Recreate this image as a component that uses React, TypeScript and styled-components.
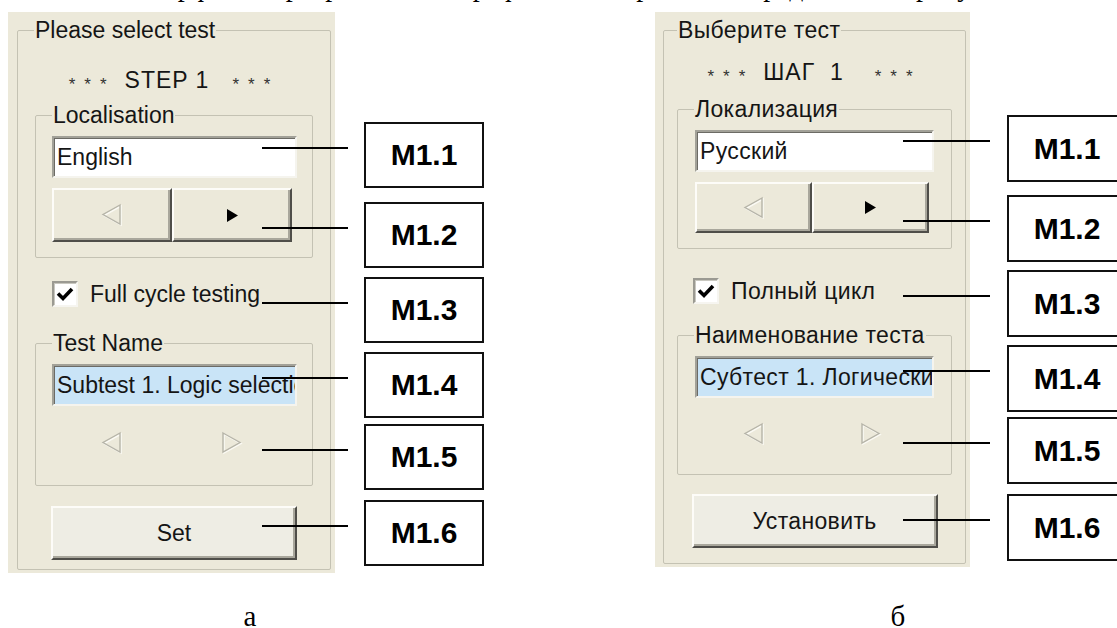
import React from 'react'
import styled, { createGlobalStyle } from 'styled-components'

const GlobalStyle = createGlobalStyle`
  html, body {
    margin: 0;
    padding: 0;
    background: #fff;
  }
  body {
    font-family: 'Liberation Sans', Arial, sans-serif;
  }
`

const Page = styled.div`
  width: 1117px;
  height: 628px;
  overflow: hidden;
  display: flex;
  flex-direction: column;
  background: #fff;
`

const LeadText = styled.p`
  margin: -28px 0 0;
  padding: 0 0 0 118px;
  height: 30px;
  font-family: 'Liberation Serif', 'Times New Roman', serif;
  font-size: 28px;
  line-height: 30px;
  white-space: nowrap;
  word-spacing: 14px;
  color: #000;
`

const Figures = styled.div`
  display: flex;
  align-items: flex-start;
  margin-top: 10px;
`

const Figure = styled.figure<{ $left: number }>`
  margin: 0 0 0 ${(p) => p.$left}px;
  display: flex;
  flex-direction: column;
  flex-shrink: 0;
`

const FigureBody = styled.div<{ $gap: number }>`
  display: flex;
  align-items: flex-start;
  gap: ${(p) => p.$gap}px;
`

const Caption = styled.figcaption<{ $top: number; $shift: number }>`
  margin-top: ${(p) => p.$top}px;
  padding-left: ${(p) => p.$shift}px;
  text-align: center;
  font-family: 'Liberation Serif', 'Times New Roman', serif;
  font-size: 29px;
  line-height: 20px;
  color: #000;
`

const Panel = styled.div<{ $w: number; $h: number; $padLeft: number; $track: number }>`
  width: ${(p) => p.$w}px;
  height: ${(p) => p.$h}px;
  box-sizing: border-box;
  flex-shrink: 0;
  padding: 7px 4px 3px ${(p) => p.$padLeft}px;
  background: #ece9da;
  display: flex;
  flex-direction: column;
  font-family: 'Liberation Sans', Tahoma, Arial, sans-serif;
  font-size: 23px;
  letter-spacing: ${(p) => p.$track}px;
  color: #151515;
`

const Group = styled.fieldset<{ $inset: number; $grow?: boolean }>`
  margin: 0 ${(p) => p.$inset}px;
  padding: 0;
  min-width: 0;
  flex: ${(p) => (p.$grow ? 1 : 'none')};
  border: 1px solid #c4c2b3;
  border-radius: 2px;
  display: flex;
  flex-direction: column;
`

const Legend = styled.legend<{ $indent: number }>`
  margin-left: ${(p) => p.$indent}px;
  padding: 0 1px;
  font-size: 23px;
  line-height: 22px;
`

const GroupBody = styled.div<{ $left: number; $right: number }>`
  display: flex;
  flex-direction: column;
  padding: 10px ${(p) => p.$right}px 15px ${(p) => p.$left}px;
`

const Step = styled.div<{ $top: number; $gap: number }>`
  margin: ${(p) => p.$top}px 0 ${(p) => p.$gap}px;
  height: 22px;
  display: flex;
  align-items: center;
  justify-content: center;
  gap: 9px;
  line-height: 22px;
`

const StepText = styled.span<{ $after: number }>`
  margin-right: ${(p) => p.$after}px;
  letter-spacing: 1px;
  white-space: pre;
`

const Stars = styled.span`
  font-size: 17px;
  letter-spacing: 9px;
  margin-top: 9px;
  color: #333;
`

const Field = styled.div<{ $tone: 'white' | 'blue' }>`
  height: 42px;
  box-sizing: border-box;
  padding-left: 3px;
  background: ${(p) => (p.$tone === 'blue' ? '#c9e4f7' : '#ffffff')};
  border: 2px solid;
  border-color: #a2a198 #f5f4ee #f5f4ee #a2a198;
  box-shadow: inset 1px 1px 0 #6c6b65;
  line-height: 38px;
  white-space: nowrap;
  overflow: hidden;
`

const ButtonRow = styled.div<{ $h: number }>`
  margin: 10px 5px 0 0;
  height: ${(p) => p.$h}px;
  display: grid;
  grid-template-columns: 1fr 1fr;
`

const NavButton = styled.button<{ $flat?: boolean }>`
  margin: 0;
  padding: 0;
  display: flex;
  align-items: center;
  justify-content: center;
  background: #ece9da;
  border: 2px solid;
  border-color: ${(p) => (p.$flat ? 'transparent' : '#fdfcf8 #4f4e49 #4f4e49 #fdfcf8')};
  box-shadow: ${(p) => (p.$flat ? 'none' : 'inset -2px -2px 0 #a9a79c')};
`

const CheckRow = styled.label<{ $top: number; $bottom: number; $indent: number }>`
  margin: ${(p) => p.$top}px 0 ${(p) => p.$bottom}px ${(p) => p.$indent}px;
  height: 26px;
  display: flex;
  align-items: center;
  gap: 12px;
  line-height: 22px;
`

const CheckBox = styled.span`
  width: 26px;
  height: 26px;
  flex-shrink: 0;
  box-sizing: border-box;
  background: #fff;
  border: 2px solid;
  border-color: #9b9a92 #f6f5f0 #f6f5f0 #9b9a92;
  box-shadow: inset 1px 1px 0 #c9c8c0;
  display: flex;
  align-items: center;
  justify-content: center;
`

const SetButton = styled.button<{ $top: number }>`
  margin: ${(p) => p.$top}px 0 0;
  align-self: center;
  width: 246px;
  height: 54px;
  padding: 0;
  background: #eeede4;
  border: 2px solid;
  border-color: #fdfcf8 #4f4e49 #4f4e49 #fdfcf8;
  box-shadow: inset -2px -2px 0 #a9a79c;
  font-family: 'Liberation Sans', Tahoma, Arial, sans-serif;
  font-size: 23px;
  letter-spacing: inherit;
  color: #151515;
`

const Callouts = styled.div`
  display: flex;
  flex-direction: column;
  flex-shrink: 0;
`

const Callout = styled.div<{ $top: number; $h: number; $lead: number; $leadW: number }>`
  position: relative;
  margin-top: ${(p) => p.$top}px;
  width: 120px;
  height: ${(p) => p.$h}px;
  box-sizing: border-box;
  border: 2px solid #111;
  background: #fff;
  display: flex;
  align-items: center;
  justify-content: center;
  font-family: 'Liberation Sans', Arial, sans-serif;
  font-weight: bold;
  font-size: 30px;
  color: #000;

  &::before {
    content: '';
    position: absolute;
    top: 23px;
    left: -${(p) => p.$lead}px;
    width: ${(p) => p.$leadW}px;
    height: 2px;
    background: #000;
  }
`

const Arrow = ({ dir, enabled }: { dir: 'left' | 'right'; enabled: boolean }) => {
  if (enabled) {
    return (
      <svg width="13" height="13" viewBox="0 0 13 13">
        <path d={dir === 'right' ? 'M1 0 L12 6.5 L1 13 Z' : 'M12 0 L1 6.5 L12 13 Z'} fill="#000" />
      </svg>
    )
  }
  const d = dir === 'left' ? 'M19 2 L2 11.5 L19 21 Z' : 'M2 2 L19 11.5 L2 21 Z'
  return (
    <svg width="22" height="24" viewBox="0 0 22 24">
      <path d={d} fill="none" stroke="#fbfaf4" strokeWidth="1.6" transform="translate(1 1)" />
      <path d={d} fill="none" stroke="#b6b4a8" strokeWidth="1.4" />
    </svg>
  )
}

const CheckMark = () => (
  <svg width="18" height="16" viewBox="0 0 18 16">
    <path d="M2 7.5 L7 12.5 L16 3" fill="none" stroke="#000" strokeWidth="3.6" />
  </svg>
)

type Spec = {
  width: number
  height: number
  padLeft: number
  track: number
  legendIndent: number
  inset: number
  bodyLeft: number
  bodyRight: number
  stepTop: number
  stepGap: number
  stepAfter: number
  buttonH: number
  checkTop: number
  checkBottom: number
  checkIndent: number
  setTop: number
  title: string
  step: string
  localeLabel: string
  locale: string
  checkLabel: string
  testLabel: string
  testName: string
  setLabel: string
}

const Dialog = ({ s }: { s: Spec }) => (
  <Panel $w={s.width} $h={s.height} $padLeft={s.padLeft} $track={s.track}>
    <Group $inset={0} $grow>
      <Legend $indent={s.legendIndent}>{s.title}</Legend>
      <Step $top={s.stepTop} $gap={s.stepGap}>
        <Stars>***</Stars>
        <StepText $after={s.stepAfter}>{s.step}</StepText>
        <Stars>***</Stars>
      </Step>
      <Group $inset={s.inset}>
        <Legend $indent={16}>{s.localeLabel}</Legend>
        <GroupBody $left={s.bodyLeft} $right={s.bodyRight}>
          <Field $tone="white">{s.locale}</Field>
          <ButtonRow $h={s.buttonH}>
            <NavButton>
              <Arrow dir="left" enabled={false} />
            </NavButton>
            <NavButton>
              <Arrow dir="right" enabled />
            </NavButton>
          </ButtonRow>
        </GroupBody>
      </Group>
      <CheckRow $top={s.checkTop} $bottom={s.checkBottom} $indent={s.checkIndent}>
        <CheckBox>
          <CheckMark />
        </CheckBox>
        {s.checkLabel}
      </CheckRow>
      <Group $inset={s.inset}>
        <Legend $indent={16}>{s.testLabel}</Legend>
        <GroupBody $left={s.bodyLeft} $right={s.bodyRight}>
          <Field $tone="blue">{s.testName}</Field>
          <ButtonRow $h={s.buttonH}>
            <NavButton $flat>
              <Arrow dir="left" enabled={false} />
            </NavButton>
            <NavButton $flat>
              <Arrow dir="right" enabled={false} />
            </NavButton>
          </ButtonRow>
        </GroupBody>
      </Group>
      <SetButton $top={s.setTop}>{s.setLabel}</SetButton>
    </Group>
  </Panel>
)

const english: Spec = {
  width: 327,
  height: 561,
  padLeft: 9,
  track: 0,
  legendIndent: 16,
  inset: 17,
  bodyLeft: 16,
  bodyRight: 15,
  stepTop: 28,
  stepGap: 13,
  stepAfter: 14,
  buttonH: 54,
  checkTop: 23,
  checkBottom: 25,
  checkIndent: 34,
  setTop: 20,
  title: 'Please select test',
  step: 'STEP 1',
  localeLabel: 'Localisation',
  locale: 'English',
  checkLabel: 'Full cycle testing',
  testLabel: 'Test Name',
  testName: 'Subtest 1. Logic selection',
  setLabel: 'Set',
}

const russian: Spec = {
  width: 315,
  height: 555,
  padLeft: 8,
  track: 0.35,
  legendIndent: 13,
  inset: 13,
  bodyLeft: 17,
  bodyRight: 17,
  stepTop: 20,
  stepGap: 15,
  stepAfter: 22,
  buttonH: 51,
  checkTop: 29,
  checkBottom: 20,
  checkIndent: 29,
  setTop: 19,
  title: 'Выберите тест',
  step: 'ШАГ  1',
  localeLabel: 'Локализация',
  locale: 'Русский',
  checkLabel: 'Полный цикл',
  testLabel: 'Наименование теста',
  testName: 'Субтест 1. Логический выбор',
  setLabel: 'Установить',
}

const labels = ['M1.1', 'M1.2', 'M1.3', 'M1.4', 'M1.5', 'M1.6']

// box tops measured from the top of the figure
const leftTops = [110, 190, 265, 340, 412, 488]
const rightTops = [103, 183, 258, 333, 405, 482]

const CalloutList = ({ tops, h, lead, leadW }: { tops: number[]; h: number; lead: number; leadW: number }) => (
  <Callouts>
    {labels.map((label, i) => (
      <Callout key={label} $top={i === 0 ? tops[0] : tops[i] - tops[i - 1] - h} $h={h} $lead={lead} $leadW={leadW}>
        {label}
      </Callout>
    ))}
  </Callouts>
)

const App = () => (
  <Page>
    <GlobalStyle />
    <LeadText>Интерфейс программы в графическом режиме представлен рисунком, имеет следующую структуру (рис</LeadText>
    <Figures>
      <Figure $left={8}>
        <FigureBody $gap={29}>
          <Dialog s={english} />
          <CalloutList tops={leftTops} h={66} lead={104} leadW={86} />
        </FigureBody>
        <Caption $top={33} $shift={8}>а</Caption>
      </Figure>
      <Figure $left={171}>
        <FigureBody $gap={37}>
          <Dialog s={russian} />
          <CalloutList tops={rightTops} h={67} lead={106} leadW={87} />
        </FigureBody>
        <Caption $top={39} $shift={14}>б</Caption>
      </Figure>
    </Figures>
  </Page>
)

export default App
